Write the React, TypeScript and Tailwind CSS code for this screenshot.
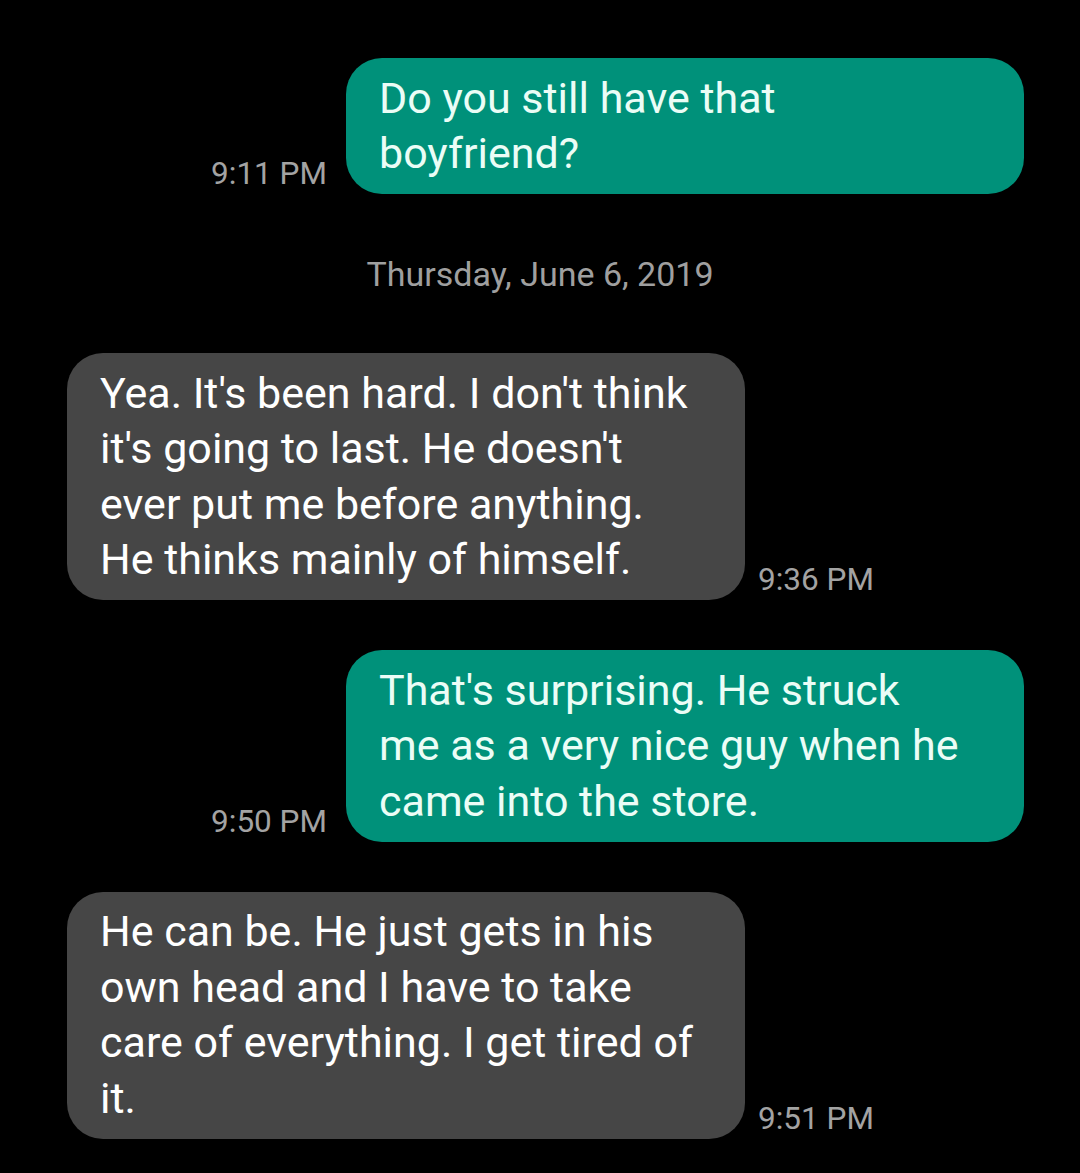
const font = { fontFamily: "Roboto, 'Noto Sans', sans-serif" };

type Msg =
  | { kind: "sent" | "received"; lines: string[]; time: string }
  | { kind: "date"; text: string };

const messages: Msg[] = [
  { kind: "sent", lines: ["Do you still have that", "boyfriend?"], time: "9:11 PM" },
  { kind: "date", text: "Thursday, June 6, 2019" },
  {
    kind: "received",
    lines: [
      "Yea. It's been hard. I don't think",
      "it's going to last. He doesn't",
      "ever put me before anything.",
      "He thinks mainly of himself.",
    ],
    time: "9:36 PM",
  },
  {
    kind: "sent",
    lines: ["That's surprising. He struck", "me as a very nice guy when he", "came into the store."],
    time: "9:50 PM",
  },
  {
    kind: "received",
    lines: ["He can be. He just gets in his", "own head and I have to take", "care of everything. I get tired of", "it."],
    time: "9:51 PM",
  },
];

function Bubble({ lines, sent }: { lines: string[]; sent: boolean }) {
  return (
    <div
      className={`w-[678px] rounded-[36px] pl-[33px] pr-[30px] py-[12.5px] text-[43px] leading-[55.5px] ${
        sent ? "bg-[#00917a] text-[#ebfdf6]" : "bg-[#464646] text-white"
      }`}
    >
      {lines.map((l, i) => (
        <div key={i} className="whitespace-nowrap">
          {l}
        </div>
      ))}
    </div>
  );
}

function Time({ t }: { t: string }) {
  return <div className="text-[31.5px] leading-[36px] text-[#a3a3a3] mb-[2px] whitespace-nowrap">{t}</div>;
}

export default function App() {
  return (
    <div className="min-h-[1173px] w-[1080px] bg-black pt-[58px]" style={font}>
      {messages.map((m, i) => {
        if (m.kind === "date") {
          return (
            <div key={i} className="mt-[60px] mb-[59px] text-center text-[34px] leading-[40px] text-[#9f9f9f]">
              {m.text}
            </div>
          );
        }
        const sent = m.kind === "sent";
        const gap = i > 0 && messages[i - 1].kind !== "date" ? "mt-[50px]" : "";
        return sent ? (
          <div key={i} className={`flex items-end justify-end gap-[19px] pr-[56px] ${gap}`}>
            <Time t={m.time} />
            <Bubble lines={m.lines} sent />
          </div>
        ) : (
          <div key={i} className={`flex items-end gap-[13px] pl-[67px] ${gap}`}>
            <Bubble lines={m.lines} sent={false} />
            <Time t={m.time} />
          </div>
        );
      })}
    </div>
  );
}
